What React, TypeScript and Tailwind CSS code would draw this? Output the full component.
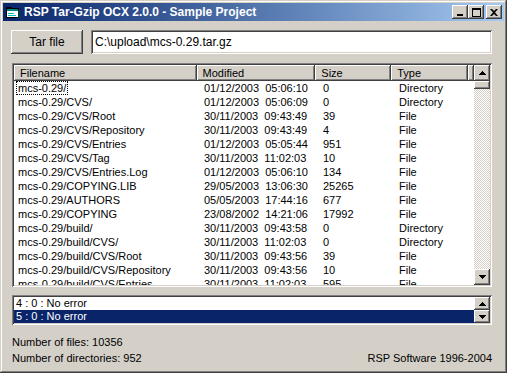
import React from 'react';

const files = [
  { name: 'mcs-0.29/', modified: '01/12/2003  05:06:10', size: '0', type: 'Directory' },
  { name: 'mcs-0.29/CVS/', modified: '01/12/2003  05:06:09', size: '0', type: 'Directory' },
  { name: 'mcs-0.29/CVS/Root', modified: '30/11/2003  09:43:49', size: '39', type: 'File' },
  { name: 'mcs-0.29/CVS/Repository', modified: '30/11/2003  09:43:49', size: '4', type: 'File' },
  { name: 'mcs-0.29/CVS/Entries', modified: '01/12/2003  05:05:44', size: '951', type: 'File' },
  { name: 'mcs-0.29/CVS/Tag', modified: '30/11/2003  11:02:03', size: '10', type: 'File' },
  { name: 'mcs-0.29/CVS/Entries.Log', modified: '01/12/2003  05:06:10', size: '134', type: 'File' },
  { name: 'mcs-0.29/COPYING.LIB', modified: '29/05/2003  13:06:30', size: '25265', type: 'File' },
  { name: 'mcs-0.29/AUTHORS', modified: '05/05/2003  17:44:16', size: '677', type: 'File' },
  { name: 'mcs-0.29/COPYING', modified: '23/08/2002  14:21:06', size: '17992', type: 'File' },
  { name: 'mcs-0.29/build/', modified: '30/11/2003  09:43:58', size: '0', type: 'Directory' },
  { name: 'mcs-0.29/build/CVS/', modified: '30/11/2003  11:02:03', size: '0', type: 'Directory' },
  { name: 'mcs-0.29/build/CVS/Root', modified: '30/11/2003  09:43:56', size: '39', type: 'File' },
  { name: 'mcs-0.29/build/CVS/Repository', modified: '30/11/2003  09:43:56', size: '10', type: 'File' },
  { name: 'mcs-0.29/build/CVS/Entries', modified: '30/11/2003  11:02:03', size: '595', type: 'File' },
];

const raised =
  'bg-[#d4d0c8] shadow-[inset_-1px_-1px_#404040,inset_1px_1px_#ffffff,inset_-2px_-2px_#808080,inset_2px_2px_#d4d0c8]';
const sunken =
  'shadow-[inset_1px_1px_#808080,inset_-1px_-1px_#ffffff,inset_2px_2px_#404040,inset_-2px_-2px_#d4d0c8]';
const headerCell =
  'h-full flex items-center pl-[6px] bg-[#d4d0c8] shadow-[inset_-1px_-1px_#404040,inset_1px_1px_#ffffff,inset_-2px_-2px_#808080]';

function Arrow({ up }: { up?: boolean }) {
  return (
    <svg width="7" height="4" viewBox="0 0 7 4">
      {up ? <path d="M3 0h1v1h1v1h1v1h1v1H0V3h1V2h1V1h1z" fill="#000" /> : <path d="M0 0h7v1H6v1H5v1H4v1H3V3H2V2H1V1H0z" fill="#000" />}
    </svg>
  );
}

function ScrollBtn({ up, h }: { up?: boolean; h: string }) {
  return (
    <div className={`w-[16px] ${h} flex items-center justify-center ${raised}`}>
      <Arrow up={up} />
    </div>
  );
}

function TitleButton({ children }: { children: React.ReactNode }) {
  return <div className={`w-[16px] h-[14px] flex items-center justify-center ${raised}`}>{children}</div>;
}

export default function App() {
  return (
    <div
      className="w-[507px] h-[373px] p-[3px] flex flex-col bg-[#d4d0c8] text-black shadow-[inset_-1px_-1px_#404040,inset_1px_1px_#d4d0c8,inset_-2px_-2px_#808080,inset_2px_2px_#ffffff] overflow-hidden"
      style={{ fontFamily: '"Liberation Sans", Arial, sans-serif' }}
    >
      {/* Title bar */}
      <div className="h-[18px] flex items-center bg-gradient-to-r from-[#0a246a] to-[#a6caf0] pl-[2px] pr-[2px]">
        <svg width="16" height="16" viewBox="0 0 16 16" className="shrink-0">
          <path d="M1 3h5l1 1h7v10H1z" fill="#000" />
          <path d="M2 5h11v8H2z" fill="#ffffff" />
          <path d="M2 5h11v2H2z" fill="#008080" />
          <path d="M3 9h6v1H3zM3 11h8v1H3z" fill="#00c0c0" />
          <path d="M13 6h2v8h-2z" fill="#004040" />
        </svg>
        <span className="ml-[3px] text-[12px] font-bold text-white leading-none whitespace-nowrap">
          RSP Tar-Gzip OCX 2.0.0 - Sample Project
        </span>
        <div className="ml-auto flex items-center">
          <TitleButton>
            <div className="w-[6px] h-[2px] bg-black mt-[6px] mr-[1px]" />
          </TitleButton>
          <TitleButton>
            <div className="w-[9px] h-[9px] border border-black border-t-2" />
          </TitleButton>
          <div className="w-[2px]" />
          <TitleButton>
            <svg width="8" height="7" viewBox="0 0 8 7">
              <path d="M0 0h2l2 2 2-2h2L5 3.5 8 7H6L4 5 2 7H0l3-3.5z" fill="#000" />
            </svg>
          </TitleButton>
        </div>
      </div>

      {/* Tar file row */}
      <div className="flex mt-[9px] ml-[8px] h-[24px]">
        <button className={`w-[72px] h-[24px] text-[12px] ${raised}`}>Tar file</button>
        <div className={`ml-[8px] w-[401px] h-[24px] bg-white flex items-center pl-[4px] text-[12px] ${sunken}`}>
          C:\upload\mcs-0.29.tar.gz
        </div>
      </div>

      {/* File list */}
      <div className={`mt-[9px] ml-[9px] w-[480px] h-[224px] bg-white p-[2px] flex ${sunken}`}>
        <div className="flex-1 flex flex-col overflow-hidden text-[11px] leading-none">
          <div className="h-[16px] flex shrink-0">
            <div className={`w-[183px] ${headerCell}`}>Filename</div>
            <div className={`w-[119px] ${headerCell}`}>Modified</div>
            <div className={`w-[76px] ${headerCell}`}>Size</div>
            <div className={`w-[77px] ${headerCell}`}>Type</div>
            <div className={`flex-1 ${headerCell}`} />
          </div>
          {files.map((f, i) => (
            <div key={i} className="h-[14px] flex items-center shrink-0 whitespace-pre">
              <div className="w-[183px] pl-[2px]">
                <span className={`px-[2px] py-[1px] ${i === 0 ? 'outline outline-1 outline-dotted outline-black -outline-offset-1' : ''}`}>
                  {f.name}
                </span>
              </div>
              <div className="w-[119px] pl-[7px]">{f.modified}</div>
              <div className="w-[76px] pl-[7px]">{f.size}</div>
              <div className="w-[77px] pl-[7px]">{f.type}</div>
            </div>
          ))}
        </div>
        <div className="w-[16px] flex flex-col bg-[repeating-conic-gradient(#d4d0c8_0_25%,#ffffff_0_50%)] bg-[length:2px_2px]">
          <ScrollBtn up h="h-[16px]" />
          <div className={`w-[16px] h-[8px] ${raised}`} />
          <div className="flex-1" />
          <ScrollBtn h="h-[16px]" />
        </div>
      </div>

      {/* Error list */}
      <div className={`mt-[8px] ml-[9px] w-[480px] h-[30px] bg-white p-[2px] flex ${sunken}`}>
        <div className="flex-1 flex flex-col text-[11px] leading-none">
          <div className="h-[13px] flex items-center pl-[2px]">4 : 0 : No error</div>
          <div className="h-[13px] flex items-center pl-[2px] bg-[#0a246a] text-white">5 : 0 : No error</div>
        </div>
        <div className="w-[16px] flex flex-col">
          <ScrollBtn up h="h-[13px]" />
          <ScrollBtn h="h-[13px]" />
        </div>
      </div>

      {/* Status */}
      <div className="mt-[9px] ml-[9px] w-[480px] text-[11px] leading-[16px]">
        <div>Number of files: 10356</div>
        <div className="flex justify-between">
          <span>Number of directories: 952</span>
          <span>RSP Software 1996-2004</span>
        </div>
      </div>
    </div>
  );
}
